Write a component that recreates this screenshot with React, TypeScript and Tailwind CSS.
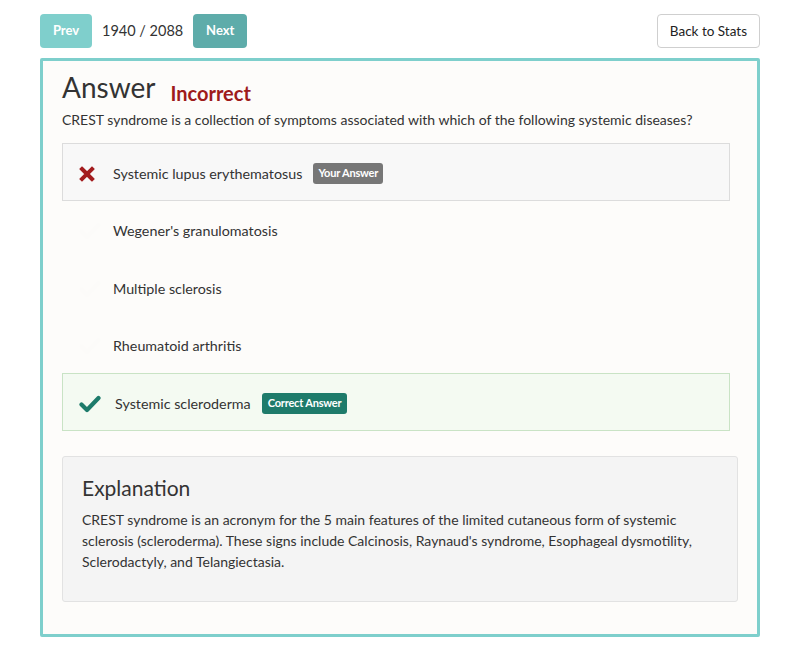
import React from "react";

interface Choice {
  text: string;
  status?: "wrong" | "right";
}

const choices: Choice[] = [
  { text: "Systemic lupus erythematosus", status: "wrong" },
  { text: "Wegener's granulomatosis" },
  { text: "Multiple sclerosis" },
  { text: "Rheumatoid arthritis" },
  { text: "Systemic scleroderma", status: "right" },
];

function CrossIcon() {
  return (
    <svg width="16" height="16" viewBox="0 0 16 16">
      <path d="M3 3 L13 13 M13 3 L3 13" stroke="#a31c1e" strokeWidth="4" strokeLinecap="square" />
    </svg>
  );
}

function CheckIcon({ color }: { color: string }) {
  return (
    <svg width="22" height="18" viewBox="0 0 22 18">
      <path d="M2.5 9.5 L8 15 L19.5 3" stroke={color} strokeWidth="4.2" fill="none" strokeLinecap="round" strokeLinejoin="round" />
    </svg>
  );
}

function ChoiceRow({ text, status }: Choice) {
  const box =
    status === "wrong"
      ? "h-[58px] bg-[#f8f8f8] border border-[#dcdcdc]"
      : status === "right"
      ? "h-[58px] bg-[#f4faf2] border border-[#c9e3c5]"
      : "h-[57.4px] border border-transparent";

  return (
    <div className={`flex items-center pl-[16px] pt-[3px] ${box}`}>
      <div className="w-[34px] flex items-center">
        {status === "wrong" && <CrossIcon />}
        {status === "right" && <CheckIcon color="#1d7b6b" />}
        {!status && <CheckIcon color="#fcfbf9" />}
      </div>
      <span className={`text-[14.3px] text-[#333] ${status === "right" ? "ml-[2px]" : ""}`}>{text}</span>
      {status === "wrong" && (
        <span className="ml-[11px] px-[5px] py-[2px] rounded-[3px] bg-[#777] text-white text-[11px] font-bold tracking-[-0.2px]">
          Your Answer
        </span>
      )}
      {status === "right" && (
        <span className="ml-[11px] px-[6px] py-[2px] rounded-[3px] bg-[#1e7b6b] text-white text-[11px] font-bold tracking-[-0.2px]">
          Correct Answer
        </span>
      )}
    </div>
  );
}

export default function App() {
  return (
    <div className="w-[800px] h-[660px] bg-white font-['Lato',sans-serif] text-[#333]">
      <div className="flex items-center justify-between px-[40px] pt-[14px]">
        <div className="flex items-center">
          <button className="h-[34px] w-[52px] rounded-[4px] bg-[#7fcfcc] text-white text-[13px] font-bold">
            Prev
          </button>
          <span className="mx-[10px] text-[14.5px] text-[#333]">1940 / 2088</span>
          <button className="h-[34px] w-[54px] rounded-[4px] bg-[#5eacaa] text-white text-[13px] font-bold">
            Next
          </button>
        </div>
        <button className="h-[34px] px-[12px] rounded-[4px] border border-[#cfcfcf] bg-white text-[13.5px] text-[#222]">
          Back to Stats
        </button>
      </div>

      <div className="mx-[40px] mt-[10px] border-[3px] border-[#7ecfcc] rounded-[2px] bg-[#fdfcfa] px-[19px] pt-[9px] pb-[32px]">
        <div className="flex items-end">
          <h1 className="text-[28px] leading-[34px] text-[#333]">Answer</h1>
          <span className="ml-[15px] mb-[-4px] text-[20px] font-bold text-[#9e1b1b]">Incorrect</span>
        </div>
        <p className="mt-[6px] text-[14px] leading-[20px] text-[#333]">
          CREST syndrome is a collection of symptoms associated with which of the following systemic diseases?
        </p>

        <div className="mt-[13px] mr-[8px]">
          {choices.map((c) => (
            <ChoiceRow key={c.text} {...c} />
          ))}
        </div>

        <div className="mt-[25px] h-[146px] rounded-[3px] border border-[#e2e2e2] bg-[#f4f4f4] px-[19px] pt-[18px]">
          <h2 className="text-[21px] leading-[26px] text-[#333]">Explanation</h2>
          <p className="mt-[8px] text-[14px] leading-[21px] text-[#333]">
            CREST syndrome is an acronym for the 5 main features of the limited cutaneous form of systemic
            sclerosis (scleroderma). These signs include Calcinosis, Raynaud's syndrome, Esophageal dysmotility,
            Sclerodactyly, and Telangiectasia.
          </p>
        </div>
      </div>
    </div>
  );
}
